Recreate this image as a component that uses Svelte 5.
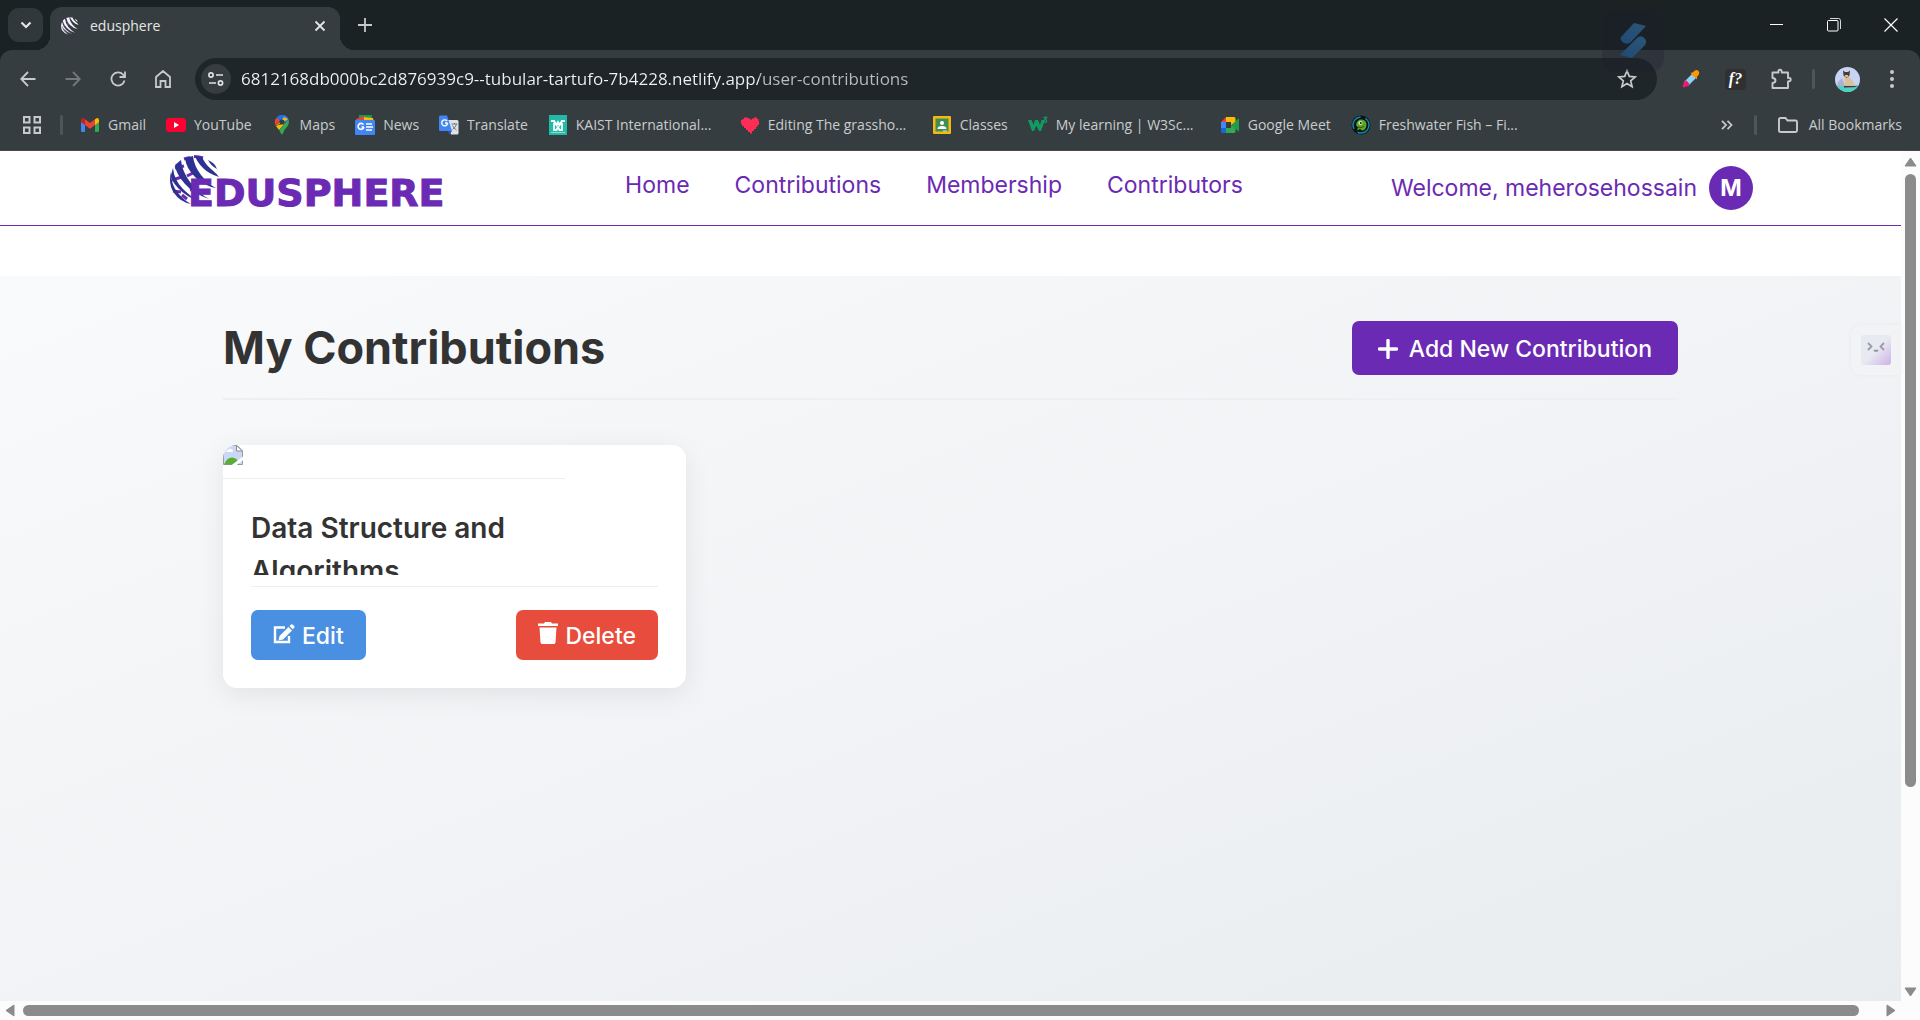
<script>
  let address = $state('6812168db000bc2d876939c9--tubular-tartufo-7b4228.netlify.app/user-contributions');

  const bookmarks = [
    { icon: 'gmail', label: 'Gmail' },
    { icon: 'youtube', label: 'YouTube' },
    { icon: 'maps', label: 'Maps' },
    { icon: 'news', label: 'News' },
    { icon: 'translate', label: 'Translate' },
    { icon: 'kaist', label: 'KAIST International...', long: true },
    { icon: 'heart', label: 'Editing The grassho...', long: true },
    { icon: 'classes', label: 'Classes' },
    { icon: 'w3', label: 'My learning | W3Sc...', long: true },
    { icon: 'meet', label: 'Google Meet' },
    { icon: 'fish', label: 'Freshwater Fish – Fi...', long: true }
  ];

  const links = ['Home', 'Contributions', 'Membership', 'Contributors'];
</script>

{#snippet bookmarkIcon(name)}
  <svg class="bm-icon" viewBox="0 0 20 20" aria-hidden="true">
    {#if name === 'gmail'}
      <path d="M1 5v10.500q0 1.500 1.500 1.500H5V8z" fill="#4285f4" />
      <path d="M19 5v10.500q0 1.500-1.500 1.500H15V8z" fill="#34a853" />
      <path d="M1 5q0-2 2-2l2 1.200V10L1 7z" fill="#c5221f" />
      <path d="M19 5q0-2-2-2l-2 1.200V10l4-3z" fill="#fbbc04" />
      <path d="M5 4.200 10 8l5-3.800V10l-5 3.800L5 10z" fill="#ea4335" />
    {:else if name === 'youtube'}
      <rect x="0" y="3" width="20" height="14" rx="3.500" fill="#ff0033" />
      <path d="M8 7v6l5-3z" fill="#fff" />
    {:else if name === 'maps'}
      <path d="M10 0a7 7 0 0 1 6.600 4.700L10 10z" fill="#4285f4" />
      <path d="M4.600 2.500A7 7 0 0 1 12.500.500L7.500 7z" fill="#1a73e8" />
      <path d="M4.600 2.500 8 5.400 4 11A7.500 7.500 0 0 1 4.600 2.500z" fill="#ea4335" />
      <path d="m4 11 8-8.500L16 4z M4 11l3 4 6-7z" fill="#fbbc04" />
      <path d="M16.500 4.500C18 9 15 12 12.800 14.500 11.500 16.500 11 19.500 10 19.500S8.500 17 7 15z" fill="#34a853" />
      <circle cx="10" cy="7" r="2.600" fill="#363d40" />
    {:else if name === 'news'}
      <path d="M4 0h13l-1 6H4z" fill="#0f9d58" />
      <path d="m1 4 9-3v7H2z" fill="#ea4335" />
      <path d="m9 2 9 1 1 5H9z" fill="#fbbc04" />
      <rect y="5" width="20" height="15" rx="1" fill="#4285f4" />
      <path d="M9 12H6.500M8.500 9.600A3 3 0 1 0 9 12" fill="none" stroke="#fff" stroke-width="1.600" />
      <path d="M11 9h6M11 12h7M11 15h6" stroke="#fff" stroke-width="1.600" />
    {:else if name === 'translate'}
      <path d="M8 5h10q1.500 0 1.500 1.500v11.500q0 1.500-1.500 1.500h-6z" fill="#dfe3e6" />
      <path d="M1.500.500H8L13 16H1.500Q0 16 0 14.500V2Q0 .500 1.500.500z" fill="#4285f4" />
      <path d="m9 16 4 0-2.500 3.500z" fill="#2a56c6" />
      <path d="M8.600 8H6M8.100 6A3 3 0 1 0 8.700 8.200" fill="none" stroke="#fff" stroke-width="1.400" />
      <path d="M12.500 9h6M15.500 8v1m2 0q-.500 3-4 5.500m0-4q1 2.500 4 4.500" fill="none" stroke="#6f7780" />
    {:else if name === 'kaist'}
      <rect x="1" y="0" width="18" height="20" fill="#1fbba6" />
      <path d="M3 6h3l2.500 4L10 7.500 11.500 10 14 6h3" fill="none" stroke="#fff" stroke-width="2.200" />
      <path d="M6 8v7h2.500l1.500-3 1.500 3H14V8" fill="none" stroke="#fff" stroke-width="1.800" />
      <path d="M3 17.500h14" stroke="#8fdcd1" />
    {:else if name === 'heart'}
      <path d="M4 2.500h4v1h2v1h2v-1h2v-1h3v1.500h1.500V6H19v4h-1.500v2H16v2h-2v2h-2v2.500h-2V17H8v-2H6v-2H4v-2H2V9H1V5h1.500V4H4z" fill="#ff2d55" />
    {:else if name === 'classes'}
      <rect x="1" y="1" width="18" height="18" rx="1" fill="#f5b912" />
      <rect x="3.500" y="3.500" width="13" height="13" fill="#3f8f52" />
      <circle cx="10" cy="8" r="2" fill="#fff" />
      <path d="M5.500 14q0-3 4.500-3t4.500 3z" fill="#fff" />
      <path d="M11 15.500h4v1h-4z" fill="#d9e8dc" />
    {:else if name === 'w3'}
      <path d="M0 5h3.500l2 5L7 5h3l2 5 1.500-5H17l-4 11h-2L8.300 10.500 6 16H4z" fill="#109b63" />
      <path d="M15.500 2.500h3l-1.500 2q2 .200 1.500 2-.700 1.500-3 .500" fill="none" stroke="#109b63" stroke-width="1.300" />
    {:else if name === 'meet'}
      <path d="M1 7l5-5v5z" fill="#ea4335" />
      <path d="M1 7h5v6H1z" fill="#4285f4" />
      <path d="M1 13h5v5H2.500Q1 18 1 16.500z" fill="#1967d2" />
      <path d="M6 2h8q1.500 0 1.500 1.500V8L11 10V7H6z" fill="#fbbc04" />
      <path d="M6 13h5v-3l4.500 2.500v4Q15.500 18 14 18H6z" fill="#34a853" />
      <path d="m11.500 10 7-6.500q.500 0 .500.500v12q0 .500-.500.500z" fill="#1e9e4a" />
    {:else}
      <circle cx="10" cy="10" r="9.500" fill="#08131a" />
      <circle cx="10" cy="10" r="8" fill="none" stroke="#1485a8" stroke-width="1.500" stroke-dasharray="16 5" />
      <path d="M5 10q1-6 6-5.500 5 1 4.500 6-1 5-4.500 5l-2-1.500-3 1.500 1-3z" fill="#5fa51e" />
      <path d="M7 12q3 2 6-1" fill="none" stroke="#235a10" />
      <circle cx="9.500" cy="8" r="2" fill="#dcebd0" /><circle cx="9.800" cy="8" r="1" fill="#111" />
    {/if}
  </svg>
{/snippet}

{#snippet globe(main, accent)}
  <path d="M5 13l9-2M2 25l10-3M14 4l6-1.500M3 36l8 1M17 21l6-3M24 1.500q5 0 9 1.500M20 35l7-2M12 40l5 4" stroke={accent} stroke-width="3" fill="none" />
  <path d="M1 17Q1 30 8 38T21 49Q10 47 4 38T1 17z" fill={main} />
  <path d="M3 13Q4 25 13 34T31 47Q16 42 8 33T1 20z" fill={main} />
  <path d="M5 10L11 5Q12 16 20 27T39 44Q24 39 15 29T5 10z" fill={main} />
  <path d="M15 3L23 1Q24 11 31 20T46 33Q34 31 25 22T15 3z" fill={main} />
  <path d="M25 1L32 2Q35 9 41 14T49 22Q39 19 33 13T25 1z" fill={main} />
  <path d="M38 5Q45 8 47 14Q41 11 38 5z" fill={main} />
{/snippet}

<div class="window">
  <div class="chrome">
    <div class="tabs">
      <button class="tab-search" aria-label="Search tabs">
        <svg width="12" height="8" viewBox="0 0 12 8"><path d="m1.500 1.500 4.500 4.500 4.500-4.500" fill="none" stroke="#e3e6e7" stroke-width="2.200" /></svg>
      </button>
      <div class="tab">
        <svg width="18" height="18" viewBox="0 0 50 50" aria-hidden="true">{@render globe('#f6f3fa', '#7544b8')}</svg>
        <span class="tab-title">edusphere</span>
        <button class="plain" aria-label="Close tab">
          <svg width="12" height="12" viewBox="0 0 12 12"><path d="m1.500 1.500 9 9m0-9-9 9" stroke="#e3e6e7" stroke-width="1.800" /></svg>
        </button>
      </div>
      <button class="plain new-tab" aria-label="New tab">
        <svg width="14" height="14" viewBox="0 0 14 14"><path d="M7 0v14M0 7h14" stroke="#c6cacc" stroke-width="1.800" /></svg>
      </button>
      <div class="win-controls">
        <button class="plain" aria-label="Minimize"><svg width="14" height="14" viewBox="0 0 14 14"><path d="M0 6.500h13" stroke="#fff" /></svg></button>
        <button class="plain" aria-label="Restore"><svg width="14" height="14" viewBox="0 0 14 14"><rect x=".5" y="2.500" width="10.500" height="10.500" rx="1" fill="none" stroke="#fff" /><path d="M3 .500h8.500q2 0 2 2V11" fill="none" stroke="#d7dadb" /></svg></button>
        <button class="plain" aria-label="Close window"><svg width="14" height="14" viewBox="0 0 14 14"><path d="m.500.500 13 13m0-13-13 13" stroke="#fff" stroke-width="1.200" /></svg></button>
      </div>
    </div>

    <div class="bars">
      <div class="toolbar">
        <div class="nav-buttons">
          <button class="plain" aria-label="Back"><svg width="16" height="16" viewBox="0 0 16 16"><path d="M15.500 8H1.500M8 1 1.200 8 8 15" fill="none" stroke="#c6cacc" stroke-width="1.800" /></svg></button>
          <button class="plain" aria-label="Forward"><svg width="16" height="16" viewBox="0 0 16 16"><path d="M.500 8h14M8 1l6.800 7L8 15" fill="none" stroke="#73797c" stroke-width="1.800" /></svg></button>
          <button class="plain" aria-label="Reload"><svg width="16" height="16" viewBox="0 0 16 16"><path d="M14.500 9.500A6.600 6.600 0 1 1 13 3.500l1.500 2M15 .500v5.500H9.500" fill="none" stroke="#c6cacc" stroke-width="1.800" /></svg></button>
          <button class="plain" aria-label="Home"><svg width="16" height="18" viewBox="0 0 16 18"><path d="M1 17V7l7-6 7 6v10h-4.500v-6h-5v6z" fill="none" stroke="#c6cacc" stroke-width="1.800" /></svg></button>
        </div>
        <div class="omnibox">
          <button class="site-info" aria-label="View site information">
            <svg width="16" height="14" viewBox="0 0 16 14"><g fill="none" stroke="#dfe2e3" stroke-width="1.700"><circle cx="3" cy="3" r="2.100" /><path d="M8 3h7M1 11h7" /><circle cx="12.500" cy="11" r="2.100" /></g></svg>
          </button>
          <input class="address" type="text" aria-label="Address" spellcheck="false" bind:value={address} />
          <button class="plain" aria-label="Bookmark this tab">
            <svg width="20" height="20" viewBox="0 0 20 20"><path d="m10 1.800 2.300 5.600 6 .500-4.600 3.900 1.400 5.900-5.100-3.200-5.100 3.200 1.400-5.900L1.700 7.900l6-.500z" fill="none" stroke="#c6cacc" stroke-width="1.700" /></svg>
          </button>
        </div>
        <div class="extensions">
          <button class="plain" aria-label="Colour picker">
            <svg width="20" height="20" viewBox="0 0 20 20"><path d="m3 13 8-8 4 4-8 8z" fill="#8fd0f5" /><path d="m3 13 2.500-1.500L8.500 15 7 17l-4.500 1.500-1-1z" fill="#f0186c" /><path d="m9.500 4 2-.500L14 1.500q2-1 3.500.500 1.500 1.500.300 3.500L16 8v2.500z" fill="#ff9800" /></svg>
          </button>
          <button class="plain font-ext" aria-label="Font finder">f?</button>
          <button class="plain" aria-label="Extensions">
            <svg width="22" height="22" viewBox="0 0 22 22"><path d="M2.500 4.500h6Q8 1.800 10 1.800t1.800 2.700H18V10q2.700-.500 2.700 1.500T18 13.500V20H2.500v-5q3-.300 3-2.500t-3-2.500z" fill="none" stroke="#c6cacc" stroke-width="1.900" stroke-linejoin="round" /></svg>
          </button>
          <span class="divider"></span>
          <button class="plain" aria-label="Profile">
            <svg width="25" height="25" viewBox="0 0 25 25"><defs><clipPath id="avatar"><circle cx="12.500" cy="12.500" r="12.500" /></clipPath></defs><g clip-path="url(#avatar)"><rect width="25" height="25" fill="#c9d3f3" /><path d="M0 18h25v7H0z" fill="#4fd0c5" /><path d="M3 15l4-4 3 8H2z" fill="#a9b3cd" /><path d="M9.500 9h4l4 5 3 5H10z" fill="#d9c09a" /><path d="m8 3.500 2 1.500h3l2-1.500-.500 5-3 2.500-3-2.500z" fill="#4a3b35" /><path d="M10 8h3v1.500l-1.500 1-1.500-1z" fill="#d9c09a" /><path d="M9 19h10l4 1-14 .500z" fill="#3d332f" /></g></svg>
          </button>
          <button class="plain menu" aria-label="Browser menu"><svg width="4" height="18" viewBox="0 0 4 18"><g fill="#c6cacc"><circle cx="2" cy="2" r="2" /><circle cx="2" cy="9" r="2" /><circle cx="2" cy="16" r="2" /></g></svg></button>
        </div>
      </div>

      <nav class="bookmarks" aria-label="Bookmarks">
        <button class="plain" aria-label="Apps"><svg width="18" height="18" viewBox="0 0 18 18"><g fill="none" stroke="#c6cacc" stroke-width="2"><rect x="1" y="1" width="5.500" height="5.500" /><rect x="11.500" y="1" width="5.500" height="5.500" /><rect x="1" y="11.500" width="5.500" height="5.500" /><rect x="11.500" y="11.500" width="5.500" height="5.500" /></g></svg></button>
        <span class="divider"></span>
        {#each bookmarks as b}
          <a class="bookmark" href="#{b.icon}">{@render bookmarkIcon(b.icon)}<span class:long={b.long}>{b.label}</span></a>
        {/each}
        <div class="bm-end">
          <button class="plain" aria-label="More bookmarks"><svg width="12" height="10" viewBox="0 0 12 10"><path d="m1 .800 4 4.200-4 4.200M6.500.800l4 4.200-4 4.200" fill="none" stroke="#c6cacc" stroke-width="1.800" /></svg></button>
          <span class="divider"></span>
          <button class="plain all"><svg width="20" height="16" viewBox="0 0 20 16"><path d="M2.500 1h5l2 2.500H17.500q1.500 0 1.500 1.500v8.500q0 1.500-1.500 1.500h-15Q1 15 1 13.500v-11Q1 1 2.500 1z" fill="none" stroke="#c6cacc" stroke-width="1.900" /></svg>All Bookmarks</button>
        </div>
      </nav>
    </div>

    <div class="floating" aria-hidden="true">
      <svg width="28" height="36" viewBox="0 0 28 36"><defs><linearGradient id="wing" x1="1" y1="0" x2="0" y2="1"><stop offset="0" stop-color="#2b5674" /><stop offset="1" stop-color="#1f4a77" /></linearGradient></defs><path d="M15 0 27 3 12 19Q9 22 5 20 0 17 2 14z" fill="url(#wing)" /><path d="m1 32 17-17q3-3 6-1 5 3 2 8L13 35z" fill="url(#wing)" /></svg>
    </div>
  </div>

  <div class="viewport">
    <div class="page">
      <header class="site-header">
        <a class="logo" href="#home" aria-label="Edusphere">
          <svg class="globe" width="50" height="51" viewBox="0 0 50 51" aria-hidden="true">{@render globe('#2e3192', '#6b2ab3')}</svg>
          <span class="wordmark">EDUSPHERE</span>
        </a>
        <nav class="site-nav" aria-label="Main">
          {#each links as l}<a href="#{l.toLowerCase()}">{l}</a>{/each}
        </nav>
        <div class="user"><span>Welcome, meherosehossain</span><button class="avatar" aria-label="Account">M</button></div>
      </header>

      <main>
        <div class="content">
          <div class="page-head">
            <h1>My Contributions</h1>
            <button class="add"><svg width="20" height="20" viewBox="0 0 20 20" aria-hidden="true"><path d="M10 1.500v17M1.500 10h17" stroke="#fff" stroke-width="3.400" stroke-linecap="round" /></svg>Add New Contribution</button>
          </div>
          <div class="cards">
            <article class="card">
              <div class="thumb">
                <svg width="20" height="20" viewBox="0 0 20 20" aria-hidden="true">
                  <path d="M.500.500H14l5.500 5.500v13.500H.500z" fill="#c8d8f6" stroke="#9b9b9b" />
                  <path d="M3 7q0-2 2-2 1-2 3-1 2 0 2 3z" fill="#fff" />
                  <path d="M1 19.500Q4 12 9.500 12.500T16 19.500z" fill="#5bad35" />
                  <path d="M13.500.500V6h6z" fill="#fff" stroke="#8d8d8d" />
                  <path d="M8 20.500 20.500 11v4L13 20.500z" fill="#fff" />
                </svg>
              </div>
              <div class="card-body">
                <h2>Data Structure and Algorithms</h2>
                <div class="actions">
                  <button class="edit"><svg width="22" height="20" viewBox="0 0 22 20" aria-hidden="true"><path d="M12 3.500H2v14.500h14v-6" fill="none" stroke="#fff" stroke-width="2.400" /><path d="m15.500 3 3.500 3.500L10 15.500l-4.500 1 1-4.500zM16.500 2l1.500-1.500q1-.700 2 .200l1 1.100q1 1 .200 1.900L19.800 5.200z" fill="#fff" /></svg>Edit</button>
                  <button class="delete"><svg width="20" height="22" viewBox="0 0 20 22" aria-hidden="true"><path d="M0 1.500h6L7 0h6l1 1.500h6v2.500H0zM1.500 5.500h17l-1 15q-.200 1.500-1.700 1.500H4.200q-1.500 0-1.700-1.500z" fill="#fff" /></svg>Delete</button>
                </div>
              </div>
            </article>
          </div>
        </div>
      </main>
      <button class="assistant" aria-label="Assistant"><svg width="30" height="30" viewBox="0 0 30 30"><defs><linearGradient id="face" x1="0" y1="0" x2="1" y2="1"><stop offset=".5" stop-color="#e8eaf2" /><stop offset="1" stop-color="#cfb0e6" /></linearGradient></defs><rect width="30" height="30" rx="3" fill="url(#face)" /><path d="m7 8 3.500 3.500L7 15M23 8l-3.500 3.500L23 15M13 15q2 2 4 0" fill="none" stroke="#989aa3" stroke-width="1.800" /></svg></button>
    </div>
    <div class="scroll vertical" aria-hidden="true">
      <svg width="13" height="10" viewBox="0 0 13 10"><path d="M6.500 1 12 9H1z" fill="#8b8b8b" stroke="#8b8b8b" stroke-linejoin="round" /></svg>
      <div class="track"><div class="thumb-bar"></div></div>
      <svg width="13" height="10" viewBox="0 0 13 10"><path d="M6.500 9 12 1H1z" fill="#8b8b8b" stroke="#8b8b8b" stroke-linejoin="round" /></svg>
    </div>
    <div class="scroll horizontal" aria-hidden="true">
      <svg width="10" height="13" viewBox="0 0 10 13"><path d="M1 6.500 9 1v11z" fill="#8b8b8b" stroke="#8b8b8b" stroke-linejoin="round" /></svg>
      <div class="track"><div class="thumb-bar"></div></div>
      <svg width="10" height="13" viewBox="0 0 10 13"><path d="M9 6.500 1 1v11z" fill="#8b8b8b" stroke="#8b8b8b" stroke-linejoin="round" /></svg>
    </div>
    <div class="corner"></div>
  </div>
</div>

<style>
  :global(body) { margin: 0; }
  * { box-sizing: border-box; }
  button { font: inherit; color: inherit; border: 0; padding: 0; cursor: pointer; }
  a { color: inherit; text-decoration: none; }
  svg { display: block; flex: none; }

  .window { min-height: 100vh; display: flex; flex-direction: column; font-family: Inter, "Liberation Sans", sans-serif; }
  .plain { background: none; display: flex; align-items: center; justify-content: center; flex: none; }

  .chrome { position: relative; background: #1b2224; color: #c9cccd; font: 14px/20px "Open Sans", "Noto Sans", sans-serif; border-bottom: 1px solid #494648; }
  .tabs { display: flex; height: 50px; padding-left: 8px; }
  .tab-search { width: 35px; height: 34px; margin: 8px 7px 0 0; border-radius: 11px; background: #31383b; display: flex; align-items: center; justify-content: center; }
  .tab { position: relative; width: 290px; margin-top: 7px; padding: 0 14px 6px 11px; display: flex; align-items: center; gap: 11px; background: #363d40; border-radius: 12px 12px 0 0; color: #e3e5e6; }
  .tab::before, .tab::after { content: ""; position: absolute; bottom: 0; width: 14px; height: 14px; }
  .tab::before { right: 100%; background: radial-gradient(circle at 0 0, transparent 14px, #363d40 14px); }
  .tab::after { left: 100%; background: radial-gradient(circle at 100% 0, transparent 14px, #363d40 14px); }
  .tab-title { flex: 1; }
  .new-tab { margin-left: 18px; }
  .win-controls { margin-left: auto; display: flex; gap: 43px; padding-right: 22px; }

  .bars { background: #363d40; border-radius: 12px 12px 0 0; }
  .toolbar { display: flex; align-items: center; height: 58px; padding: 0 26px 0 20px; }
  .nav-buttons { display: flex; gap: 29px; margin-right: 24px; }
  .omnibox { flex: 1; height: 42px; border-radius: 21px; background: #1f2629; display: flex; align-items: center; padding: 0 20px 0 6px; }
  .site-info { width: 30px; height: 30px; border-radius: 50%; background: #363d40; display: flex; align-items: center; justify-content: center; flex: none; }
  .address { flex: 1; min-width: 0; margin-left: 10px; padding: 0; border: 0; outline: 0; font: 17px/24px "Open Sans", "Noto Sans", sans-serif; color: transparent; caret-color: #fff; background: linear-gradient(90deg, #f0f2f2 518px, #b9bdbf 518px); background-clip: text; -webkit-background-clip: text; }
  .extensions { display: flex; align-items: center; gap: 24px; margin-left: 24px; }
  .extensions .divider { margin: 0 -4px; }
  .font-ext { width: 21px; height: 21px; border-radius: 4px; background: #303030; color: #fff; font: italic bold 16px/20px "Liberation Serif", serif; }
  .divider { width: 3px; height: 20px; border-radius: 2px; background: #4f565a; flex: none; }
  .menu { margin-left: 6px; }

  .bookmarks { display: flex; align-items: center; gap: 20px; height: 42px; padding: 0 18px 8px 23px; white-space: nowrap; }
  .bookmark { display: flex; align-items: center; gap: 8px; }
  .bookmarks > .plain + .divider { margin: 0 -3px 0 -1px; }
  .bm-icon { width: 20px; height: 20px; }
  .long { width: 144px; overflow: hidden; }
  .bm-end { margin-left: auto; display: flex; align-items: center; gap: 21px; }
  .all { gap: 11px; }
  .floating { position: absolute; right: 256px; top: 10px; width: 62px; height: 62px; border-radius: 14px; background: rgba(22, 27, 42, 0.25); display: flex; align-items: center; justify-content: center; pointer-events: none; }

  .viewport { flex: 1; display: grid; grid-template-columns: 1fr 19px; grid-template-rows: 1fr 19px; }
  .page { position: relative; display: flex; flex-direction: column; background: #fff; min-width: 0; }
  .site-header { display: flex; align-items: center; justify-content: space-between; height: 75px; padding: 0 148px 0 170px; border-bottom: 1px solid #6b2ab3; color: #6b2ab3; font-size: 23px; line-height: 30px; white-space: nowrap; }
  .logo { display: grid; width: 307px; height: 75px; padding-top: 4px; }
  .globe { grid-area: 1 / 1; }
  .wordmark { grid-area: 1 / 1; padding: 15px 0 0 18px; font: bold 38px/46px "DejaVu Sans", Inter, sans-serif; -webkit-text-stroke: 1px #6b2ab3; }
  .site-nav { display: flex; gap: 45px; padding-bottom: 6px; }
  .user { display: flex; align-items: center; gap: 12px; }
  .avatar { width: 44px; height: 44px; border-radius: 50%; background: #6b2ab3; color: #fff; font-weight: 700; }

  main { flex: 1; margin-top: 50px; padding: 45px 24px; background: linear-gradient(to bottom right, #f9fafc, #e9ecef); color: #333; }
  .content { max-width: 1455px; margin: 0 auto; }
  .page-head { display: flex; align-items: center; justify-content: space-between; padding-bottom: 23px; margin-bottom: 45px; border-bottom: 2px solid #eeeff1; }
  h1 { margin: 0; font-size: 45px; line-height: 54px; font-weight: 700; }
  .add { display: flex; align-items: center; gap: 11px; height: 54px; padding: 2px 26px 0; border-radius: 7px; background: #6b2ab3; color: #fff; font-size: 23px; font-weight: 500; }
  .cards { display: grid; grid-template-columns: repeat(3, 1fr); gap: 33px; }
  .card { background: #fff; border-radius: 14px; overflow: hidden; box-shadow: 0 6px 28px rgba(0, 0, 0, 0.08); }
  .thumb { width: 342px; height: 34px; border-bottom: 1px solid #eee; }
  .card-body { padding: 28px; }
  h2 { margin: 0 0 11px; max-width: 342px; height: 68px; overflow: hidden; font-size: 28px; line-height: 43px; font-weight: 600; }
  .actions { display: flex; justify-content: space-between; padding-top: 23px; border-top: 1px solid #eee; }
  .actions button { display: flex; align-items: baseline; gap: 7px; padding: 12px 22px 10px; border-radius: 7px; color: #fff; font-size: 23px; line-height: 28px; font-weight: 500; }
  .actions svg { margin-bottom: 3px; }
  .edit { background: #4a90e2; }
  .delete { background: #e74c3c; }
  .assistant { position: absolute; right: 0; top: 174px; width: 50px; height: 50px; display: flex; align-items: center; padding-left: 10px; border-radius: 10px 0 0 10px; background: #f2f3f5; box-shadow: 0 0 4px rgba(0, 0, 0, 0.04); }

  .scroll { background: #fcfcfc; display: flex; align-items: center; }
  .vertical { flex-direction: column; padding: 6px 0 4px; gap: 7px; }
  .horizontal { padding: 0 5px; gap: 8px; }
  .track { flex: 1; }
  .thumb-bar { border-radius: 6px; background: #8b8b8b; }
  .vertical .thumb-bar { width: 11px; height: 76%; }
  .vertical .track { display: flex; }
  .horizontal .thumb-bar { height: 11px; width: 99%; }
  .corner { background: #fcfcfc; }
</style>
